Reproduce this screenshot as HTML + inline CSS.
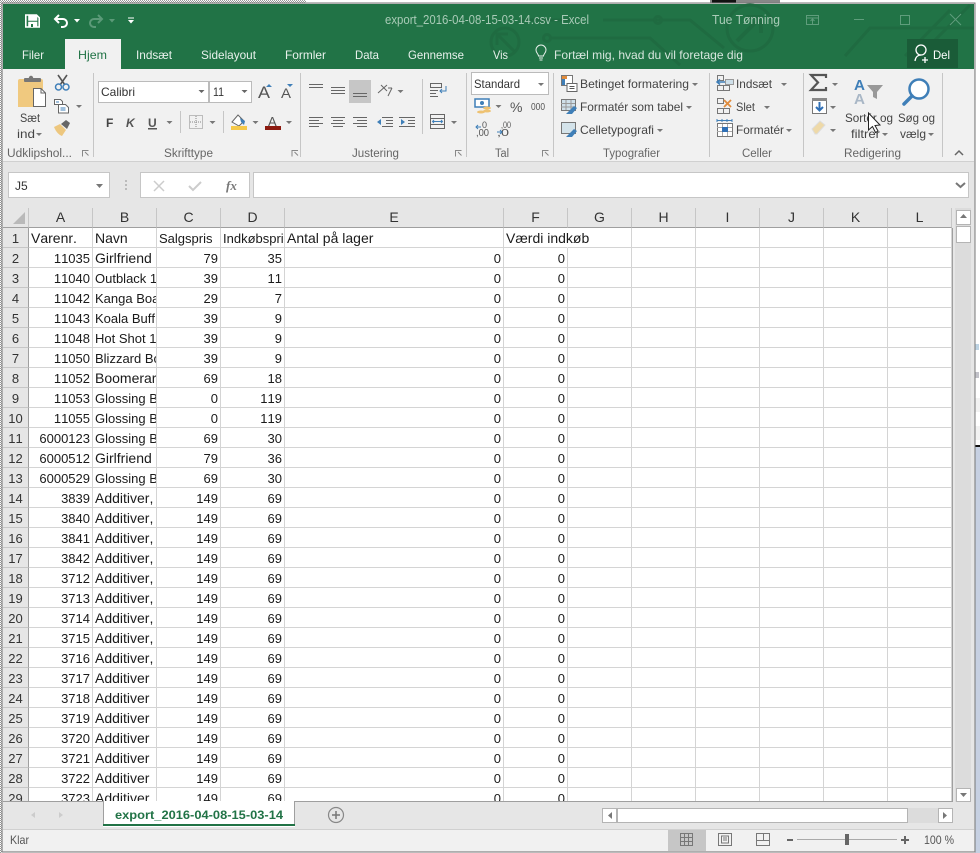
<!DOCTYPE html>
<html lang="da"><head><meta charset="utf-8"><title>export_2016-04-08-15-03-14.csv - Excel</title>
<style>
html,body{margin:0;padding:0;background:#fff}
body{position:relative;width:980px;height:853px;overflow:hidden;font-family:"Liberation Sans",sans-serif}
svg#c{position:absolute;left:0;top:0}
svg text{font-family:"Liberation Sans",sans-serif;font-size:12px;fill:#444}
#g{position:absolute;left:3px;top:208px;width:949px;height:593px;overflow:hidden;background:#fff}
table{border-collapse:separate;border-spacing:0;table-layout:fixed;width:949px;font-size:14px;color:#1a1a1a;font-kerning:none}
td,th{box-sizing:border-box;height:20px;padding:2px 2px 0;border-right:1px solid #d4d4d4;border-bottom:1px solid #d4d4d4;overflow:hidden;white-space:nowrap;font-weight:normal;line-height:17px}
th{background:#e6e6e6;border-color:#c6c6c6;text-align:center;color:#333}
thead th{border-bottom:1px solid #9f9f9f;padding:0;line-height:19px}
tbody th{border-right:1px solid #9f9f9f;border-bottom:1px solid #c6c6c6;font-size:13px;padding:2px 0 0}
td.n,td:empty{font-size:13px}
td.n{text-align:right}
td.s{font-size:13px}
td.o{overflow:visible;border-right-color:transparent}
</style></head><body>
<svg id="c" width="980" height="853" viewBox="0 0 980 853" xmlns="http://www.w3.org/2000/svg">
<defs><pattern id="ck" width="2" height="2" patternUnits="userSpaceOnUse"><rect width="1" height="1" fill="#999"/><rect x="1" y="1" width="1" height="1" fill="#999"/></pattern></defs>
<rect width="980" height="853" fill="#fff"/>
<rect x="0" y="0" width="306" height="3" fill="url(#ck)"/><rect x="0" y="0" width="2" height="853" fill="url(#ck)"/>
<rect x="710" y="0" width="70" height="3" fill="#888"/><rect x="712" y="0" width="24" height="3" fill="#111"/>
<rect x="975" y="344" width="4" height="6" fill="#5a90b8" opacity=".4"/><rect x="975" y="372" width="4" height="6" fill="#667" opacity=".4"/>
<rect x="975" y="398" width="5" height="14" fill="#f2f2f2"/><rect x="975" y="426" width="5" height="14" fill="#f2f2f2"/><rect x="975" y="445" width="5" height="408" fill="#c6d0e2"/><rect x="975" y="445" width="5" height="2" fill="#111"/>

<!-- window -->
<rect x="2" y="3" width="973" height="849" fill="#e6e6e6" stroke="#777" stroke-width="1"/>
<rect x="3" y="4" width="971" height="65" fill="#217346"/>
<g fill="none" stroke="#1f6b41" stroke-width="3">
<circle cx="505" cy="42" r="14"/><path d="M514 51 498 35M497 45V34H508"/>
<circle cx="750" cy="28" r="23"/><path d="M737 41 760 18M746 17H761V33" stroke-width="4"/>
<path d="M603 20H690L724 48"/><circle cx="658" cy="20" r="3.5"/>
<path d="M551 38H650L680 65"/><circle cx="547" cy="38" r="3.5"/>
<path d="M845 56 870 28H974M905 56 950 10M935 40 970 5"/>
<path d="M520 20H570"/>
</g>

<!-- QAT -->
<g fill="none" stroke="#fff" stroke-width="1.6">
<path d="M25.8 15h10.7l2.7 2.7V27H25.8z"/><path d="M29 15v5h7.5v-5"/><path d="M29 27v-4.5h7.5V27" />
</g><rect x="29" y="15" width="7.5" height="4.5" fill="#fff"/><rect x="29.5" y="23" width="6.5" height="4" fill="#fff"/><rect x="31" y="24" width="2" height="3" fill="#217346"/>
<g fill="none" stroke="#fff" stroke-width="2"><path d="M59 15l-4 4 4 4"/><path d="M55 19h8a4 4 0 0 1 0 8h-2"/></g>
<g fill="none" stroke="#5b9a78" stroke-width="2"><path d="M98 15l4 4-4 4"/><path d="M102 19h-8a4 4 0 0 0 0 8h2"/></g>
<path d="M74 19h6l-3 3.5z" fill="#fff"/><path d="M109 19h6l-3 3.5z" fill="#5b9a78"/>
<path d="M128 17.5h6v1h-6zM128 20h6l-3 3.5z" fill="#fff"/>

<!-- title -->
<text x="385" y="24" textLength="204" lengthAdjust="spacingAndGlyphs" style="fill:#a9cbb7;font-size:12.5px">export_2016-04-08-15-03-14.csv - Excel</text>
<text x="712" y="24" textLength="68" lengthAdjust="spacingAndGlyphs" style="fill:#a9cbb7;font-size:12.5px">Tue Tønning</text>
<g fill="none" stroke="#5f9d7c" stroke-width="1"><rect x="806.5" y="15.5" width="12" height="9"/><path d="M806.5 18h12M812.5 24v-4.5M810.5 21l2-2 2 2"/><path d="M854 19.5h10"/><rect x="900.5" y="15.5" width="9" height="9"/><path d="M950 14l11 11M961 14l-11 11"/></g>

<!-- tabs -->
<rect x="65" y="39" width="56" height="31" fill="#f1f1f1"/>
<text x="22" y="59" textLength="22" lengthAdjust="spacingAndGlyphs" style="fill:#e8f1ec">Filer</text>
<text x="78" y="59" textLength="29" lengthAdjust="spacingAndGlyphs" style="fill:#217346">Hjem</text>
<text x="136" y="59" textLength="36" lengthAdjust="spacingAndGlyphs" style="fill:#e8f1ec">Indsæt</text>
<text x="201" y="59" textLength="55" lengthAdjust="spacingAndGlyphs" style="fill:#e8f1ec">Sidelayout</text>
<text x="285" y="59" textLength="41" lengthAdjust="spacingAndGlyphs" style="fill:#e8f1ec">Formler</text>
<text x="355" y="59" textLength="24" lengthAdjust="spacingAndGlyphs" style="fill:#e8f1ec">Data</text>
<text x="408" y="59" textLength="56" lengthAdjust="spacingAndGlyphs" style="fill:#e8f1ec">Gennemse</text>
<text x="493" y="59" textLength="15" lengthAdjust="spacingAndGlyphs" style="fill:#e8f1ec">Vis</text>
<text x="554" y="59" textLength="189" lengthAdjust="spacingAndGlyphs" style="fill:#d6e6dd">Fortæl mig, hvad du vil foretage dig</text>
<g fill="none" stroke="#e8f1ec" stroke-width="1"><path d="M539 58h4M539.5 60h3M538.5 56c0-2-2.5-3-2.5-6a5 5 0 0 1 10 0c0 3-2.5 4-2.5 6z"/></g>
<rect x="907" y="39" width="51" height="29" fill="#1a5c38"/>
<g fill="none" stroke="#fff" stroke-width="1.3"><circle cx="921" cy="50" r="5"/><path d="M915 61c.5-4 3-6 6-6M925 57v6M922 60h6"/></g>
<text x="933" y="59" textLength="17" lengthAdjust="spacingAndGlyphs" style="fill:#fff">Del</text>

<!-- ribbon -->
<rect x="3" y="69" width="971" height="92" fill="#f1f1f1"/>
<rect x="3" y="161" width="971" height="1" fill="#d0d0d0"/>
<g fill="#c6c6c6"><rect x="93" y="73" width="1" height="84"/><rect x="300" y="73" width="1" height="84"/><rect x="466" y="73" width="1" height="84"/><rect x="553" y="73" width="1" height="84"/><rect x="709" y="73" width="1" height="84"/><rect x="803" y="73" width="1" height="84"/><rect x="942" y="73" width="1" height="84"/>
<rect x="180" y="111" width="1" height="22"/><rect x="223" y="111" width="1" height="22"/><rect x="422" y="79" width="1" height="55"/></g>

<!-- group labels -->
<text x="7" y="157" textLength="65" lengthAdjust="spacingAndGlyphs" style="fill:#666;font-size:11.5px">Udklipshol...</text>
<text x="164" y="157" textLength="49" lengthAdjust="spacingAndGlyphs" style="fill:#666;font-size:11.5px">Skrifttype</text>
<text x="352" y="157" textLength="47" lengthAdjust="spacingAndGlyphs" style="fill:#666;font-size:11.5px">Justering</text>
<text x="495" y="157" textLength="14" lengthAdjust="spacingAndGlyphs" style="fill:#666;font-size:11.5px">Tal</text>
<text x="603" y="157" textLength="57" lengthAdjust="spacingAndGlyphs" style="fill:#666;font-size:11.5px">Typografier</text>
<text x="742" y="157" textLength="30" lengthAdjust="spacingAndGlyphs" style="fill:#666;font-size:11.5px">Celler</text>
<text x="844" y="157" textLength="57" lengthAdjust="spacingAndGlyphs" style="fill:#666;font-size:11.5px">Redigering</text>
<g fill="none" stroke="#888" stroke-width="1"><path d="M82.5 156.500v-6h6M85 152l3.500 3.500M292 156.500v-6h6M294.500 152l3.500 3.500M455.500 156.500v-6h6M458 152l3.500 3.500M542.500 156.500v-6h6M545 152l3.500 3.500"/></g>
<path d="M955 155l4-4 4 4" fill="none" stroke="#666" stroke-width="1.500"/>

<!-- clipboard -->
<path d="M18 81a2 2 0 0 1 2-2h5v-1h4a2 2 0 0 1 4 0h3v1h5a2 2 0 0 1 2 2v26H18z" fill="#f0c97f"/>
<rect x="24" y="78" width="17" height="4" rx="1" fill="#777"/><circle cx="31" cy="78" r="2.200" fill="#777"/>
<path d="M33.500 88.500h7.500l4.500 4.500v13.500h-12z" fill="#fff" stroke="#666"/><path d="M41 88.500v4.500h4.500" fill="none" stroke="#666"/>
<text x="20" y="122" textLength="20" lengthAdjust="spacingAndGlyphs">Sæt</text><text x="17" y="138" textLength="18" lengthAdjust="spacingAndGlyphs">ind</text>
<path d="M36 133h6l-3 3z" fill="#777"/>
<g fill="none"><path d="M58 75l7 10M67 75l-7 10" stroke="#555" stroke-width="1.600"/><circle cx="58.500" cy="87" r="3" stroke="#3f7fb8" stroke-width="1.500"/><circle cx="66" cy="87" r="3" stroke="#3f7fb8" stroke-width="1.500"/></g>
<path d="M54.500 99.500h6l2 2v3h-8zM58.500 104.500h7l3 3v5.500h-10z" fill="#fff" stroke="#666"/><path d="M60.500 108h5M60.500 110h5M56 102h3" stroke="#3f7fb8"/>
<path d="M76 105h6l-3 3z" fill="#777"/>
<path d="M54 127l6-3 6 6-4 6c-3-1-6-4-8-9z" fill="#edc77f"/><path d="M61 124l5-4 4 3-3 6z" fill="#666"/>

<!-- font -->
<rect x="98.500" y="81.500" width="110" height="21" fill="#fff" stroke="#bbb"/><rect x="209.500" y="81.500" width="42" height="21" fill="#fff" stroke="#bbb"/>
<text x="101" y="96" textLength="34" lengthAdjust="spacingAndGlyphs" style="fill:#333">Calibri</text><text x="213" y="96" textLength="11" lengthAdjust="spacingAndGlyphs" style="fill:#333">11</text>
<path d="M198.500 90h6l-3 3zM241.500 90h6l-3 3z" fill="#666"/>
<text x="258" y="98" textLength="12" lengthAdjust="spacingAndGlyphs" style="font-size:17px;fill:#555">A</text><text x="281" y="98" textLength="10" lengthAdjust="spacingAndGlyphs" style="font-size:14px;fill:#555">A</text>
<path d="M266 87l3-3 3 3zM287 84h6l-3 3z" fill="#3f7fb8"/>
<text x="106" y="127" style="font-size:12px;font-weight:bold;fill:#444">F</text>
<text x="126" y="127" style="font-size:12px;font-weight:bold;font-style:italic;fill:#555">K</text>
<text x="148" y="127" style="font-size:12px;font-weight:bold;fill:#555">U</text><rect x="148" y="128" width="9" height="1.500" fill="#555"/>
<path d="M166.500 121h6l-3 3zM209.500 121h6l-3 3zM252.500 121h6l-3 3zM286 121h6l-3 3z" fill="#777"/>
<rect x="189.500" y="115.500" width="13" height="13" fill="none" stroke="#888" stroke-dasharray="1 1"/><path d="M196 116v12M190 122h12" stroke="#888" stroke-dasharray="1 1"/>
<path d="M232 122l6-7 6 6-5 5z" fill="#fff" stroke="#666"/><path d="M240 118l5 3-1 4-3-3z" fill="#3f7fb8"/><rect x="231" y="126" width="16" height="4" fill="#f5c94a"/>
<text x="268" y="126" style="font-size:13px;fill:#555">A</text><rect x="265" y="126" width="16" height="4" fill="#8c1a10"/>

<!-- alignment -->
<g stroke="#666" stroke-width="1"><path d="M309 84.500h14M309 87.500h14M331 87.500h14M331 90.500h14M331 93.500h14"/>
<path d="M309 117.500h14M309 120.500h10M309 123.500h14M309 126.500h10M331 117.500h14M333 120.500h10M331 123.500h14M333 126.500h10M353 117.500h14M357 120.500h10M353 123.500h14M357 126.500h10"/></g>
<rect x="349" y="80" width="22" height="23" fill="#c6c6c6"/><path d="M353 93.500h14M353 96.500h14" stroke="#666"/>
<g fill="none" stroke="#666"><path d="M378 93l9-8M381 85l6 6M388 96l4-8M392 88h-4"/></g><path d="M397.500 90h6l-3 3zM451 121h6l-3 3z" fill="#777"/>
<g stroke="#666"><path d="M382 117.500h11M386 120.500h7M386 123.500h7M382 126.500h11M399 117.500h16M408 120.500h7M408 123.500h7M399 126.500h16"/></g>
<path d="M377 122l4-3v6zM384 122h2M405 122l-4-3v6z" fill="#3f7fb8"/>
<rect x="430.500" y="83.500" width="11" height="4" fill="none" stroke="#666"/><path d="M430 90.500h8M430 93.500h6M430 96.500h8" stroke="#666"/><path d="M446 86v5h-6M442 89l-2 2 2 2" fill="none" stroke="#3f7fb8"/>
<rect x="430.500" y="114.500" width="14" height="14" fill="none" stroke="#666"/><path d="M431 118.500h13M431 124.500h13" stroke="#666"/><path d="M433 121.500h9M434 120l-1.500 1.500 1.500 1.500M441 120l1.500 1.500-1.500 1.500" fill="none" stroke="#3f7fb8"/>

<!-- number -->
<rect x="471.500" y="72.500" width="77" height="22" fill="#fff" stroke="#bbb"/>
<text x="474" y="88" textLength="46" lengthAdjust="spacingAndGlyphs" style="fill:#333">Standard</text><path d="M538 83h6l-3 3zM495.500 105h6l-3 3z" fill="#777"/>
<rect x="475" y="99" width="14" height="8" fill="#fff" stroke="#3f7fb8" stroke-width="1.500"/><circle cx="482" cy="103" r="2" fill="#3f7fb8"/><ellipse cx="487" cy="108" rx="4" ry="1.500" fill="#eec272"/><ellipse cx="487" cy="111" rx="4" ry="1.500" fill="#eec272"/><ellipse cx="481" cy="112" rx="4" ry="1.500" fill="#eec272"/>
<text x="510" y="112" style="font-size:14px;fill:#555">%</text>
<text x="531" y="110" textLength="14" lengthAdjust="spacingAndGlyphs" style="font-size:10px;fill:#555">000</text>
<text x="476" y="136" textLength="13" lengthAdjust="spacingAndGlyphs" style="font-size:10px;fill:#555">,00</text><text x="482" y="128" style="font-size:9px;fill:#555">0</text>
<text x="497" y="136" textLength="12" lengthAdjust="spacingAndGlyphs" style="font-size:10px;fill:#555">,0</text><text x="501" y="128" textLength="10" lengthAdjust="spacingAndGlyphs" style="font-size:9px;fill:#555">,00</text>
<path d="M476 127h5M478 125l-2 2 2 2M497 132h5M500 130l2 2-2 2" fill="none" stroke="#3f7fb8"/>

<!-- styles -->
<rect x="561.500" y="75.500" width="11" height="10" fill="#fff" stroke="#777"/><rect x="562" y="76" width="5" height="3" fill="#e08b3c"/><rect x="562" y="79" width="3" height="6" fill="#3f7fb8"/><rect x="567" y="83.500" width="10" height="8" fill="#fff" stroke="#666"/><path d="M569.500 86.500h5M569.500 88.500h5" stroke="#555"/>
<rect x="561.500" y="99.500" width="14" height="11" fill="#cfe0ea" stroke="#777"/><path d="M561 103.500h14M561 107h14M566 100v10M571 100v10" stroke="#999"/><path d="M566 114l5-5 3-3 3 2-5 6z" fill="#3f7fb8"/>
<rect x="561.500" y="122.500" width="14" height="11" fill="#d4e3ea" stroke="#777"/><path d="M566 137l5-5 3-3 3 2-5 6z" fill="#3f7fb8"/>
<text x="580" y="88" textLength="109" lengthAdjust="spacingAndGlyphs">Betinget formatering</text>
<text x="580" y="111" textLength="103" lengthAdjust="spacingAndGlyphs">Formatér som tabel</text>
<text x="580" y="134" textLength="74" lengthAdjust="spacingAndGlyphs">Celletypografi</text>
<path d="M692 83h6l-3 3zM686 106h6l-3 3zM657 129h6l-3 3z" fill="#777"/>

<!-- cells -->
<g fill="none" stroke="#777"><path d="M717.500 75.500h6v5h-6zM717.500 85.500h6v5h-6zM723.500 85.500h6v5h-6z"/><path d="M717.500 98.500h6v5h-6zM717.500 108.500h6v5h-6zM723.500 108.500h6v5h-6z"/></g>
<rect x="725.500" y="79.500" width="8" height="5" fill="#cfe0ea" stroke="#999"/><path d="M717 82h8M720 79.500l-3 2.500 3 2.500" fill="none" stroke="#3f7fb8" stroke-width="1.500"/>
<path d="M724 100l7 7M731 100l-7 7" stroke="#e08b3c" stroke-width="1.800"/>
<rect x="717.500" y="123.500" width="15" height="13" fill="#fff" stroke="#777"/><path d="M717 127.500h15M717 131.500h15M722.500 124v12M727.500 124v12" stroke="#aaa"/><rect x="722" y="127" width="6" height="5" fill="#2f6fb5"/><path d="M717 120.500h15M717 119v3M732 119v3M722 119v3M727 119v3" stroke="#3f7fb8"/>
<text x="736" y="88" textLength="36" lengthAdjust="spacingAndGlyphs">Indsæt</text><text x="736" y="111" textLength="19" lengthAdjust="spacingAndGlyphs">Slet</text><text x="736" y="134" textLength="48" lengthAdjust="spacingAndGlyphs">Formatér</text>
<path d="M781 83h6l-3 3zM764 106h6l-3 3zM786 129h6l-3 3z" fill="#777"/>

<!-- editing -->
<path d="M826 78v-3h-15l7 7.500-7 7.500h15v-3" fill="none" stroke="#555" stroke-width="2.200"/>
<path d="M832 83h6l-3 3zM830 106h6l-3 3zM830 129h6l-3 3z" fill="#777"/>
<rect x="812.500" y="98.500" width="14" height="15" fill="#fff" stroke="#777"/><rect x="812" y="98" width="15" height="3" fill="#888"/><path d="M819.500 102v8M816 107l3.500 3.500L823 107" fill="none" stroke="#2f6fb5" stroke-width="2"/>
<path d="M812 129l8-8 5 4-8 9h-2z" fill="#eed9a8" stroke="#ddd"/>
<text x="854" y="90" textLength="11" lengthAdjust="spacingAndGlyphs" style="font-size:15px;fill:#3f7fb8;font-weight:bold">A</text>
<text x="854" y="104" textLength="11" lengthAdjust="spacingAndGlyphs" style="font-size:15px;fill:#a9b7c6;font-weight:bold">A</text>
<path d="M867 85h16l-6 7v7l-4-2v-5z" fill="#999"/>
<text x="845" y="122" textLength="48" lengthAdjust="spacingAndGlyphs">Sortér og</text><text x="851" y="138" textLength="29" lengthAdjust="spacingAndGlyphs">filtrer</text>
<path d="M882 133h6l-3 3zM928 133h6l-3 3z" fill="#777"/>
<circle cx="919" cy="89" r="9.500" fill="#fff" stroke="#3f7fb8" stroke-width="2.500"/><path d="M912 96l-8 8" stroke="#3f7fb8" stroke-width="3.500" stroke-linecap="round"/>
<text x="898" y="122" textLength="37" lengthAdjust="spacingAndGlyphs">Søg og</text><text x="900" y="138" textLength="26" lengthAdjust="spacingAndGlyphs">vælg</text>
<path d="M868.500 113v17l4-3.500 3 6 2.500-1.500-3-5.500 5-.5z" fill="#fff" stroke="#222"/>

<!-- formula bar -->
<rect x="8.500" y="172.500" width="101" height="25" fill="#fff" stroke="#c6c6c6"/>
<text x="15" y="190" style="font-size:12px;fill:#333">J5</text><path d="M96 184h7l-3.500 4z" fill="#777"/>
<path d="M125 180h2v2h-2zM125 184h2v2h-2zM125 188h2v2h-2z" fill="#bbb"/>
<rect x="140.500" y="172.500" width="109" height="25" fill="#fff" stroke="#c6c6c6"/>
<path d="M154 181l10 10M164 181l-10 10" stroke="#ccc" stroke-width="1.500"/><path d="M189 186l4 4 8-8" fill="none" stroke="#ccc" stroke-width="2"/>
<text x="226" y="190" style="font-family:'Liberation Serif',serif;font-size:13px;font-style:italic;font-weight:bold;fill:#777">fx</text>
<rect x="253.500" y="172.500" width="715" height="25" fill="#fff" stroke="#c6c6c6"/><path d="M956 183l4.500 4 4.500-4" fill="none" stroke="#777" stroke-width="2"/>

<!-- scrollbar -->
<rect x="952" y="208" width="22" height="594" fill="#dcdcdc"/><rect x="952" y="208" width="3" height="594" fill="#e6e6e6"/><rect x="971" y="208" width="3" height="594" fill="#e6e6e6"/>
<rect x="956.500" y="210.500" width="14" height="14" fill="#fff" stroke="#b4b4b4"/><path d="M960 218h7l-3.500-4z" fill="#777"/>
<rect x="956.500" y="226.500" width="14" height="16" fill="#fff" stroke="#b4b4b4"/>
<rect x="956.500" y="788.500" width="14" height="13" fill="#fff" stroke="#b4b4b4"/><path d="M960 793h7l-3.500 4z" fill="#777"/>
<rect x="951" y="228" width="2" height="574" fill="#9f9f9f"/>

<!-- sheet tabs -->
<rect x="3" y="802" width="971" height="27" fill="#e6e6e6"/>
<rect x="3" y="801" width="950" height="1" fill="#9f9f9f"/>
<path d="M35 812v6l-4-3zM59 812v6l4-3z" fill="#ccc"/>
<rect x="103" y="801" width="192" height="26" fill="#fff"/><rect x="103" y="801" width="1" height="25" fill="#9f9f9f"/><rect x="294" y="801" width="1" height="25" fill="#9f9f9f"/><rect x="103" y="824" width="192" height="2" fill="#217346"/>
<text x="115" y="819" textLength="168" lengthAdjust="spacingAndGlyphs" style="font-size:12px;font-weight:bold;fill:#217346">export_2016-04-08-15-03-14</text>
<circle cx="336" cy="815" r="7.500" fill="none" stroke="#888" stroke-width="1.200"/><path d="M332 815h8M336 811v8" stroke="#777" stroke-width="1.500"/>
<rect x="602.500" y="808.500" width="14" height="14" fill="#fff" stroke="#b4b4b4"/><path d="M612 812v7l-4-3.500z" fill="#777"/>
<rect x="617.500" y="808.500" width="290" height="14" fill="#fff" stroke="#b4b4b4"/><rect x="908" y="808" width="30" height="15" fill="#dcdcdc"/>
<rect x="938.500" y="808.500" width="14" height="14" fill="#fff" stroke="#b4b4b4"/><path d="M943 812v7l4-3.500z" fill="#777"/>

<!-- status -->
<rect x="3" y="829" width="971" height="22" fill="#f1f1f1"/><rect x="3" y="829" width="971" height="1" fill="#d0d0d0"/>
<text x="10" y="844" textLength="19" lengthAdjust="spacingAndGlyphs" style="fill:#555">Klar</text>
<rect x="668" y="830" width="38" height="21" fill="#c6c6c6"/>
<g fill="none" stroke="#777"><path d="M680.500 833.500h12v12h-12zM680.500 837.500h12M680.500 841.500h12M684.500 833.500v12M688.500 833.500v12"/>
<rect x="718.500" y="833.500" width="13" height="12"/><path d="M721.500 836v7h7v-7zM723 838h4M723 840h4"/>
<path d="M756.500 833.500h13v12h-13zM756.500 840.500h7v-7M763.500 840.500h6"/>
<path d="M797 839.500h100" stroke="#aaa"/></g>
<rect x="787" y="839" width="6" height="2" fill="#666"/><rect x="901" y="839" width="8" height="2" fill="#666"/><rect x="904" y="836" width="2" height="8" fill="#666"/>
<rect x="845" y="834" width="4" height="11" fill="#666"/>
<text x="924" y="844" textLength="30" lengthAdjust="spacingAndGlyphs" style="fill:#555">100 %</text>
</svg>

<div id="g"><table>
<colgroup><col style="width:26px"><col style="width:64px"><col style="width:64px"><col style="width:64px"><col style="width:64px"><col style="width:219px"><col style="width:64px"><col style="width:64px"><col style="width:64px"><col style="width:64px"><col style="width:64px"><col style="width:64px"><col style="width:64px"></colgroup>
<thead><tr><th></th><th>A</th><th>B</th><th>C</th><th>D</th><th>E</th><th>F</th><th>G</th><th>H</th><th>I</th><th>J</th><th>K</th><th>L</th></tr></thead>
<tbody>
<tr><th>1</th><td>Varenr.</td><td>Navn</td><td class="s">Salgspris</td><td class="s">Indkøbspris</td><td>Antal på lager</td><td class="o">Værdi indkøb</td><td></td><td></td><td></td><td></td><td></td><td></td></tr>
<tr><th>2</th><td class="n">11035</td><td>Girlfriend</td><td class="n">79</td><td class="n">35</td><td class="n">0</td><td class="n">0</td><td></td><td></td><td></td><td></td><td></td><td></td></tr>
<tr><th>3</th><td class="n">11040</td><td class="s">Outblack 1</td><td class="n">39</td><td class="n">11</td><td class="n">0</td><td class="n">0</td><td></td><td></td><td></td><td></td><td></td><td></td></tr>
<tr><th>4</th><td class="n">11042</td><td class="s">Kanga Boa</td><td class="n">29</td><td class="n">7</td><td class="n">0</td><td class="n">0</td><td></td><td></td><td></td><td></td><td></td><td></td></tr>
<tr><th>5</th><td class="n">11043</td><td class="s">Koala Buff</td><td class="n">39</td><td class="n">9</td><td class="n">0</td><td class="n">0</td><td></td><td></td><td></td><td></td><td></td><td></td></tr>
<tr><th>6</th><td class="n">11048</td><td class="s">Hot Shot 1</td><td class="n">39</td><td class="n">9</td><td class="n">0</td><td class="n">0</td><td></td><td></td><td></td><td></td><td></td><td></td></tr>
<tr><th>7</th><td class="n">11050</td><td class="s">Blizzard Bo</td><td class="n">39</td><td class="n">9</td><td class="n">0</td><td class="n">0</td><td></td><td></td><td></td><td></td><td></td><td></td></tr>
<tr><th>8</th><td class="n">11052</td><td>Boomerar</td><td class="n">69</td><td class="n">18</td><td class="n">0</td><td class="n">0</td><td></td><td></td><td></td><td></td><td></td><td></td></tr>
<tr><th>9</th><td class="n">11053</td><td class="s">Glossing B</td><td class="n">0</td><td class="n">119</td><td class="n">0</td><td class="n">0</td><td></td><td></td><td></td><td></td><td></td><td></td></tr>
<tr><th>10</th><td class="n">11055</td><td class="s">Glossing B</td><td class="n">0</td><td class="n">119</td><td class="n">0</td><td class="n">0</td><td></td><td></td><td></td><td></td><td></td><td></td></tr>
<tr><th>11</th><td class="n">6000123</td><td class="s">Glossing B</td><td class="n">69</td><td class="n">30</td><td class="n">0</td><td class="n">0</td><td></td><td></td><td></td><td></td><td></td><td></td></tr>
<tr><th>12</th><td class="n">6000512</td><td>Girlfriend</td><td class="n">79</td><td class="n">36</td><td class="n">0</td><td class="n">0</td><td></td><td></td><td></td><td></td><td></td><td></td></tr>
<tr><th>13</th><td class="n">6000529</td><td class="s">Glossing B</td><td class="n">69</td><td class="n">30</td><td class="n">0</td><td class="n">0</td><td></td><td></td><td></td><td></td><td></td><td></td></tr>
<tr><th>14</th><td class="n">3839</td><td>Additiver,</td><td class="n">149</td><td class="n">69</td><td class="n">0</td><td class="n">0</td><td></td><td></td><td></td><td></td><td></td><td></td></tr>
<tr><th>15</th><td class="n">3840</td><td>Additiver,</td><td class="n">149</td><td class="n">69</td><td class="n">0</td><td class="n">0</td><td></td><td></td><td></td><td></td><td></td><td></td></tr>
<tr><th>16</th><td class="n">3841</td><td>Additiver,</td><td class="n">149</td><td class="n">69</td><td class="n">0</td><td class="n">0</td><td></td><td></td><td></td><td></td><td></td><td></td></tr>
<tr><th>17</th><td class="n">3842</td><td>Additiver,</td><td class="n">149</td><td class="n">69</td><td class="n">0</td><td class="n">0</td><td></td><td></td><td></td><td></td><td></td><td></td></tr>
<tr><th>18</th><td class="n">3712</td><td>Additiver,</td><td class="n">149</td><td class="n">69</td><td class="n">0</td><td class="n">0</td><td></td><td></td><td></td><td></td><td></td><td></td></tr>
<tr><th>19</th><td class="n">3713</td><td>Additiver,</td><td class="n">149</td><td class="n">69</td><td class="n">0</td><td class="n">0</td><td></td><td></td><td></td><td></td><td></td><td></td></tr>
<tr><th>20</th><td class="n">3714</td><td>Additiver,</td><td class="n">149</td><td class="n">69</td><td class="n">0</td><td class="n">0</td><td></td><td></td><td></td><td></td><td></td><td></td></tr>
<tr><th>21</th><td class="n">3715</td><td>Additiver,</td><td class="n">149</td><td class="n">69</td><td class="n">0</td><td class="n">0</td><td></td><td></td><td></td><td></td><td></td><td></td></tr>
<tr><th>22</th><td class="n">3716</td><td>Additiver,</td><td class="n">149</td><td class="n">69</td><td class="n">0</td><td class="n">0</td><td></td><td></td><td></td><td></td><td></td><td></td></tr>
<tr><th>23</th><td class="n">3717</td><td>Additiver</td><td class="n">149</td><td class="n">69</td><td class="n">0</td><td class="n">0</td><td></td><td></td><td></td><td></td><td></td><td></td></tr>
<tr><th>24</th><td class="n">3718</td><td>Additiver</td><td class="n">149</td><td class="n">69</td><td class="n">0</td><td class="n">0</td><td></td><td></td><td></td><td></td><td></td><td></td></tr>
<tr><th>25</th><td class="n">3719</td><td>Additiver</td><td class="n">149</td><td class="n">69</td><td class="n">0</td><td class="n">0</td><td></td><td></td><td></td><td></td><td></td><td></td></tr>
<tr><th>26</th><td class="n">3720</td><td>Additiver</td><td class="n">149</td><td class="n">69</td><td class="n">0</td><td class="n">0</td><td></td><td></td><td></td><td></td><td></td><td></td></tr>
<tr><th>27</th><td class="n">3721</td><td>Additiver</td><td class="n">149</td><td class="n">69</td><td class="n">0</td><td class="n">0</td><td></td><td></td><td></td><td></td><td></td><td></td></tr>
<tr><th>28</th><td class="n">3722</td><td>Additiver</td><td class="n">149</td><td class="n">69</td><td class="n">0</td><td class="n">0</td><td></td><td></td><td></td><td></td><td></td><td></td></tr>
<tr><th>29</th><td class="n">3723</td><td>Additiver</td><td class="n">149</td><td class="n">69</td><td class="n">0</td><td class="n">0</td><td></td><td></td><td></td><td></td><td></td><td></td></tr>
<tr><th>30</th><td></td><td></td><td></td><td></td><td></td><td></td><td></td><td></td><td></td><td></td><td></td><td></td></tr>
</tbody></table></div>
<svg style="position:absolute;left:13px;top:212px" width="13" height="13"><path d="M12 0v12H0z" fill="#b9b9b9"/></svg>
</body></html>
